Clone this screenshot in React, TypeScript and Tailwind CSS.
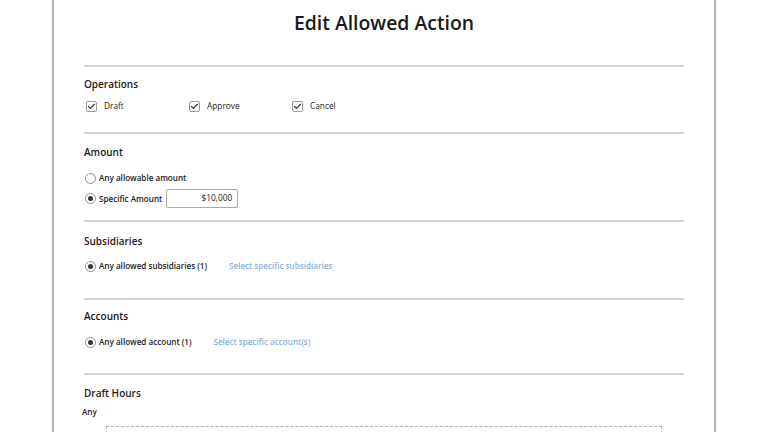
import { Check } from 'lucide-react';

const font = { fontFamily: '"Open Sans", "Noto Sans", sans-serif' };

function Divider() {
  return <div className="h-[2px] bg-[#d2d2d2]" />;
}

function Checkbox({ label }: { label: string }) {
  return (
    <div className="flex items-center w-[103px]">
      <span className="w-[11px] h-[11px] border border-[#9a9a9a] rounded-[2px] flex items-center justify-center bg-white">
        <Check size={9} strokeWidth={3} className="text-[#333]" />
      </span>
      <span className="ml-[7px] text-[8.3px] leading-[12px] text-[#222]">{label}</span>
    </div>
  );
}

function Radio({ checked, label }: { checked: boolean; label: string }) {
  return (
    <div className="flex items-center">
      <span className="w-[11px] h-[11px] rounded-full border border-[#8f8f8f] flex items-center justify-center bg-white">
        {checked && <span className="w-[5px] h-[5px] rounded-full bg-[#333]" />}
      </span>
      <span className="ml-[3px] text-[8.1px] leading-[12px] font-semibold text-[#222]">{label}</span>
    </div>
  );
}

function Header({ children }: { children: string }) {
  return <div className="text-[10px] leading-[14px] font-semibold text-[#1a1a1a]">{children}</div>;
}

export default function App() {
  return (
    <div className="w-[768px] h-[432px] overflow-hidden bg-white" style={font}>
      <div className="ml-[52px] w-[664px] h-full border-x-2 border-[#b4b4b4] px-[30px]">
        <div className="h-[65px] flex items-start justify-center pt-[9px]">
          <h1 className="text-[19.4px] leading-[28px] font-semibold text-[#1a1a1a]">Edit Allowed Action</h1>
        </div>
        <Divider />

        {/* Operations */}
        <div className="pt-[10px] pb-[20px]">
          <Header>Operations</Header>
          <div className="flex mt-[9px] ml-[2px]">
            <Checkbox label="Draft" />
            <Checkbox label="Approve" />
            <Checkbox label="Cancel" />
          </div>
        </div>
        <Divider />

        {/* Amount */}
        <div className="pt-[11px] pb-[12px]">
          <Header>Amount</Header>
          <div className="mt-[13px] ml-[1px]">
            <Radio checked={false} label="Any allowable amount" />
          </div>
          <div className="mt-[5px] ml-[1px] flex items-center">
            <Radio checked label="Specific Amount" />
            <div className="ml-[4px] w-[72px] h-[19px] border border-[#a8a8a8] rounded-[2px] flex items-center justify-end pr-[5px] text-[8.3px] text-[#222]">
              $10,000
            </div>
          </div>
        </div>
        <Divider />

        {/* Subsidiaries */}
        <div className="pt-[12px] pb-[26px]">
          <Header>Subsidiaries</Header>
          <div className="mt-[12px] ml-[1px] flex items-center">
            <Radio checked label="Any allowed subsidiaries (1)" />
            <span className="ml-[22px] text-[8.1px] leading-[12px] font-semibold text-[#8cb2cf]">Select specific subsidiaries</span>
          </div>
        </div>
        <Divider />

        {/* Accounts */}
        <div className="pt-[9px] pb-[25px]">
          <Header>Accounts</Header>
          <div className="mt-[13px] ml-[1px] flex items-center">
            <Radio checked label="Any allowed account (1)" />
            <span className="ml-[22px] text-[8.1px] leading-[12px] font-semibold text-[#8cb2cf]">Select specific account(s)</span>
          </div>
        </div>
        <Divider />

        {/* Draft Hours */}
        <div className="pt-[11px]">
          <Header>Draft Hours</Header>
          <div className="mt-[6px] -ml-[2px] text-[8.1px] leading-[12px] font-semibold text-[#222]">Any</div>
          <div className="mt-[8px] ml-[22px] w-[556px] h-[40px] border border-dashed border-[#b0b0b0] flex justify-center pt-[2px]">
            <span className="text-[8px] leading-[10px] text-[#999] tracking-wide">ADD TIME</span>
          </div>
        </div>
      </div>
    </div>
  );
}
